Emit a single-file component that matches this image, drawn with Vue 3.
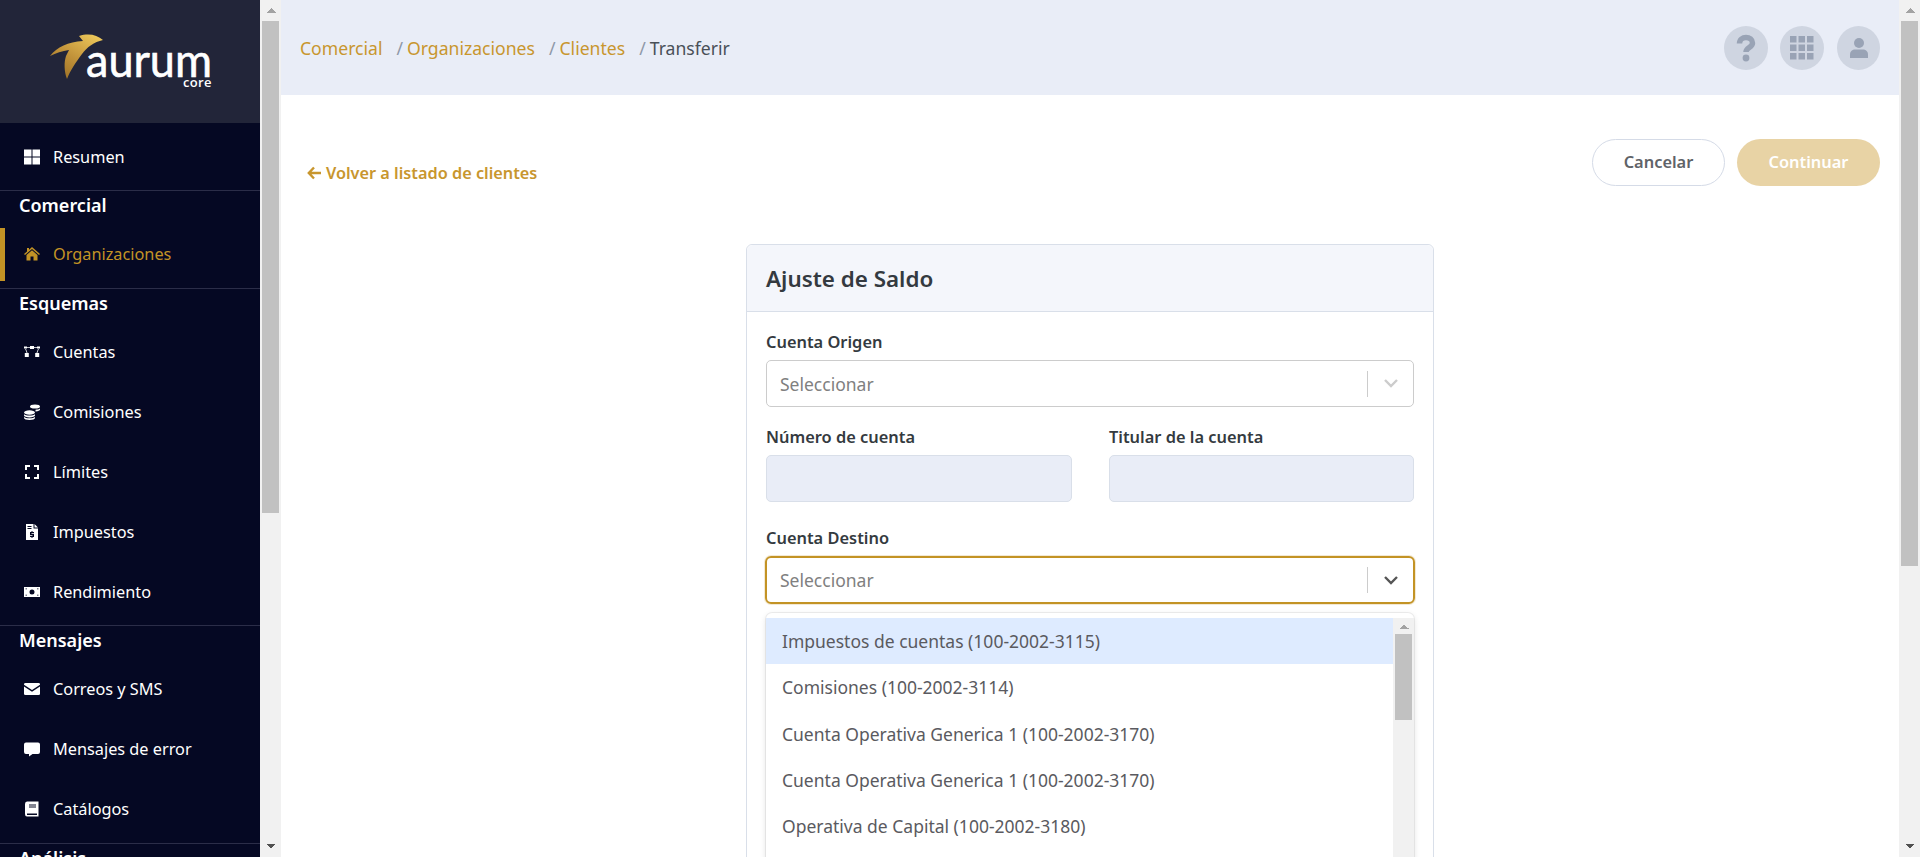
<template>
  <div class="layout">

    <!-- sidebar -->
    <aside class="sidebar">
      <div class="logo">
        <svg width="180" height="70" viewBox="0 0 180 70">
          <defs>
            <linearGradient id="gold" x1="0.9" y1="0" x2="0.2" y2="1">
              <stop offset="0" stop-color="#efca5c" />
              <stop offset="0.55" stop-color="#c2933a" />
              <stop offset="1" stop-color="#9c7026" />
            </linearGradient>
          </defs>
          <path fill="url(#gold)" d="M10 31C17 22 28 17 43 16L39 11C49 8 57 10 63 15C54 17 47 22 42 29C36 37 30 46 27 54C24 46 24 37 26 31C27 29 28 27 29 25C22 26 16 28 10 31Z" />
          <text class="logo-name" x="46" y="52" textLength="126" lengthAdjust="spacingAndGlyphs">aurum</text>
          <text class="logo-sub" x="172" y="62" text-anchor="end">core</text>
        </svg>
      </div>

      <nav>
        <div v-for="(group, i) in menu" :key="i" class="group">
          <div v-if="group.title" class="group-title">{{ group.title }}</div>
          <a v-for="item in group.items" :key="item.label" class="item" :class="{ active: item.active }">
            <svg class="item-icon" width="16" height="16" viewBox="0 0 16 16">
              <path fill="currentColor" fill-rule="evenodd" :d="icons[item.icon]" />
            </svg>
            <span>{{ item.label }}</span>
          </a>
        </div>
      </nav>
    </aside>
    <div class="scrollbar">
      <div class="sb-btn up"></div>
      <div class="sb-track"><div class="sb-thumb side-thumb"></div></div>
      <div class="sb-btn down"></div>
    </div>

    <!-- main content -->
    <main class="main">
      <header class="topbar">
        <div class="crumbs">
          <a>Comercial</a>
          <span class="sep">/</span><a>Organizaciones</a>
          <span class="sep">/</span><a>Clientes</a>
          <span class="sep">/</span><span class="current">Transferir</span>
        </div>
        <div class="top-actions">
          <button class="round">
            <svg width="24" height="28" viewBox="0 0 24 28">
              <path d="M5.500 9.500C5.500 5.500 8.500 3.500 12 3.500S18.500 5.500 18.500 9C18.500 13.500 12 13.500 12 18" fill="none" stroke="#99a3b5" stroke-width="5.500" />
              <circle cx="12" cy="24" r="3.400" fill="#99a3b5" />
            </svg>
          </button>
          <button class="round">
            <svg width="24" height="24" viewBox="0 0 24 24" fill="#99a3b5">
              <template v-for="r in 3" :key="r">
                <rect v-for="c in 3" :key="c" :x="(c - 1) * 8.500" :y="(r - 1) * 8.500" width="6.500" height="6.500" />
              </template>
            </svg>
          </button>
          <button class="round">
            <svg width="20" height="22" viewBox="0 0 20 22" fill="#99a3b5">
              <circle cx="10" cy="6" r="5" />
              <path d="M1 21V17.500C1 14 3.500 12.500 6 12.500H14C16.500 12.500 19 14 19 17.500V21Z" />
            </svg>
          </button>
        </div>
      </header>

      <div class="toolbar">
        <a class="back">
          <svg width="15" height="14" viewBox="0 0 15 14">
            <path d="M14 7H2M7 1.500L1.800 7L7 12.500" fill="none" stroke="currentColor" stroke-width="2.400" />
          </svg>
          Volver a listado de clientes
        </a>
        <div class="toolbar-btns">
          <button class="btn btn-cancel">Cancelar</button>
          <button class="btn btn-go">Continuar</button>
        </div>
      </div>

      <section class="card">
        <div class="card-head">Ajuste de Saldo</div>
        <div class="card-body">
          <label>Cuenta Origen</label>
          <div class="select">
            <span>Seleccionar</span>
            <div class="select-arrow">
              <svg width="14" height="9" viewBox="0 0 14 9"><path d="M1 1L7 7L13 1" fill="none" stroke="#cccccc" stroke-width="2.400" /></svg>
            </div>
          </div>

          <div class="two-cols">
            <div>
              <label>Número de cuenta</label>
              <div class="readonly"></div>
            </div>
            <div>
              <label>Titular de la cuenta</label>
              <div class="readonly"></div>
            </div>
          </div>

          <label>Cuenta Destino</label>
          <div class="select-wrap">
            <div class="select focused">
              <span>Seleccionar</span>
              <div class="select-arrow">
                <svg width="14" height="9" viewBox="0 0 14 9"><path d="M1 1L7 7L13 1" fill="none" stroke="#555555" stroke-width="2.400" /></svg>
              </div>
            </div>
            <div class="dropdown">
              <div class="options">
                <div v-for="(o, i) in accounts" :key="i" class="option" :class="{ hover: i === 0 }">{{ o }}</div>
              </div>
              <div class="scrollbar list-bar">
                <div class="sb-btn up"></div>
                <div class="sb-track"><div class="sb-thumb list-thumb"></div></div>
                <div class="sb-btn down"></div>
              </div>
            </div>
          </div>
        </div>
      </section>
    </main>
    <div class="scrollbar">
      <div class="sb-btn up"></div>
      <div class="sb-track"><div class="sb-thumb main-thumb"></div></div>
      <div class="sb-btn down"></div>
    </div>
  </div>
</template>

<script setup>
const icons = {
  grid: 'M0 0.500h7.500v7H0zM8.500 0.500H16v7H8.500zM0 8.500h7.500v7H0zM8.500 8.500H16v7H8.500z',
  home: 'M8 1L16 8L15 9L8 3L1 9L0 8L3 5.400V2h2v1.700zM8 4.300L13.500 9v5.500h-4v-4h-3v4h-4V9z',
  diagram: 'M6 2h4v3H6zM0 2.500h3v2H0zM13 2.500h3v2h-3zM0.800 9h4v4h-4zM11.200 9h4v4h-4zM3 3h3v0.700H3zM10 3h3v0.700h-3zM2 5l1.500 4h-0.800L1.200 5zM14 5l-1.500 4h0.800L14.800 5z',
  coins: 'M6 2.500a5 2 0 1 0 10 0a5 2 0 1 0-10 0zM11.500 5.700c2 0 3.500-0.400 4.500-1.200v1.300c0 0.800-1.800 1.500-4.500 1.600zM0 8.500a5.500 2.200 0 1 0 11 0a5.500 2.200 0 1 0-11 0zM0 10.200c1 0.900 3 1.400 5.500 1.400s4.500-0.500 5.500-1.400v1.300c0 1-2.500 1.900-5.500 1.900S0 12.500 0 11.500zM0 13c1 0.900 3 1.300 5.500 1.300s4.500-0.400 5.500-1.300v1c0 1-2.500 2-5.500 2S0 15 0 14z',
  limits: 'M1 1h5v2H3v3H1zM10 1h5v5h-2V3h-3zM1 10h2v3h3v2H1zM13 10h2v5h-5v-2h3z',
  invoice: 'M2 0h7.500v4.500H14V16H2zM10.500 0L14 3.500h-3.500zM3.500 2h4v1h-4zM3.500 4h4v1h-4zM7.500 7h1v1h1.500v1.200H7.500v0.800h2.500v3H8.500v1h-1v-1H6v-1.200h2.500v-0.800H6V8h1.500z',
  money: 'M0 3h16v10H0zM5.500 8a2.500 2.500 0 1 0 5 0a2.500 2.500 0 1 0-5 0zM1.500 4.500h1.500v0.800H1.500zM13 4.500h1.500v0.800H13zM1.500 10.700h1.500v0.800H1.500zM13 10.700h1.500v0.800H13z',
  mail: 'M0 3.200Q0 2 1.500 2h13Q16 2 16 3.200v0.600L8 9L0 3.800zM0 5.500L8 10.700L16 5.500V13q0 1-1.500 1h-13Q0 14 0 13z',
  comment: 'M2 1.500h12q2 0 2 2v7.500q0 2-2 2H8.500l-3.500 2.500v-2.500H2q-2 0-2-2V3.500q0-2 2-2z',
  book: 'M3 0.500h11.500v15H3Q1 15.500 1 13V3Q1 0.500 3 0.500zM5 3.500h7v1H5zM5 5.500h7v1H5zM3 12.500h10v1.500H3z'
};

const menu = [
  { items: [{ label: 'Resumen', icon: 'grid' }] },
  { title: 'Comercial', items: [{ label: 'Organizaciones', icon: 'home', active: true }] },
  {
    title: 'Esquemas',
    items: [
      { label: 'Cuentas', icon: 'diagram' },
      { label: 'Comisiones', icon: 'coins' },
      { label: 'Límites', icon: 'limits' },
      { label: 'Impuestos', icon: 'invoice' },
      { label: 'Rendimiento', icon: 'money' }
    ]
  },
  {
    title: 'Mensajes',
    items: [
      { label: 'Correos y SMS', icon: 'mail' },
      { label: 'Mensajes de error', icon: 'comment' },
      { label: 'Catálogos', icon: 'book' }
    ]
  },
  { title: 'Análisis', items: [] }
];

const accounts = [
  'Impuestos de cuentas (100-2002-3115)',
  'Comisiones (100-2002-3114)',
  'Cuenta Operativa Generica 1 (100-2002-3170)',
  'Cuenta Operativa Generica 1 (100-2002-3170)',
  'Operativa de Capital (100-2002-3180)'
];
</script>

<style>
html, body { margin: 0; height: 100%; overflow: hidden; }
</style>

<style scoped>
.layout {
  display: flex;
  height: 857px;
  overflow: hidden;
  font-family: "Noto Sans", sans-serif;
  color: #343a40;
  background: #fff;
}

/* drawn scrollbars */
.scrollbar {
  display: flex;
  flex-direction: column;
  flex: none;
  width: 21px;
  background: #f1f1f1;
}
.sb-btn {
  flex: none;
  height: 21px;
  background-repeat: no-repeat;
  background-position: center;
  background-size: 10px 5px;
}
.sb-btn.up { background-image: conic-gradient(from 135deg at 50% 0, #a3a3a3 90deg, transparent 0); }
.sb-btn.down { background-image: conic-gradient(from -45deg at 50% 100%, #505050 90deg, transparent 0); }
.sb-track { flex: 1; padding: 0 2px; }
.sb-thumb { background: #c1c1c1; }
.side-thumb { height: 492px; }
.main-thumb { height: 545px; }
.list-thumb { height: 86px; }
.list-bar .sb-btn { height: 16px; }

/* sidebar */
.sidebar {
  width: 260px;
  flex: none;
  overflow: hidden;
  background: #050823;
}
.logo {
  height: 123px;
  background: #222539;
  padding: 25px 0 0 40px;
  box-sizing: border-box;
}
.logo svg { display: block; }
.logo-name { font-family: "Lato", sans-serif; font-size: 47px; fill: #fff; stroke: #fff; stroke-width: 0.6px; }
.logo-sub { font-family: "Open Sans", sans-serif; font-size: 13px; font-weight: 600; letter-spacing: 0.4px; fill: #fff; }

nav { padding-top: 7px; }
.group + .group { border-top: 1px solid #2b2d48; }
.group-title {
  height: 36.500px;
  line-height: 29px;
  padding-left: 19px;
  font-size: 18px;
  font-weight: 600;
  color: #fff;
}
.item {
  display: flex;
  align-items: center;
  height: 53px;
  margin-bottom: 7px;
  padding-left: 24px;
  color: #fff;
  font-size: 16.300px;
}
.item-icon { flex: none; margin-right: 13px; }
.item.active {
  color: #c39325;
  border-left: 5px solid #c39325;
  padding-left: 19px;
}

/* main */
.main { flex: 1; min-width: 0; overflow: hidden; }

.topbar {
  display: flex;
  align-items: center;
  justify-content: space-between;
  height: 95px;
  padding: 0 19px;
  background: #e9edf7;
}
.crumbs { font-size: 17.600px; color: #c8962e; }
.sep { color: #8f98a8; margin: 0 4px 0 14px; }
.current { color: #495057; }
.top-actions { display: flex; gap: 12px; }
.round {
  display: flex;
  align-items: center;
  justify-content: center;
  width: 44px;
  height: 44px;
  padding: 0;
  border: none;
  border-radius: 50%;
  background: #cfd5e1;
}
.round:last-child { width: 43px; margin-left: 1px; }

.toolbar {
  display: flex;
  align-items: flex-end;
  justify-content: space-between;
  padding: 44px 19px 0 26px;
}
.back {
  display: flex;
  align-items: center;
  gap: 4px;
  line-height: 24px;
  margin-bottom: 1px;
  font-size: 16.300px;
  font-weight: 600;
  color: #c8962e;
}
.toolbar-btns { display: flex; gap: 12px; }
.btn {
  height: 47px;
  padding-bottom: 3px;
  border-radius: 24px;
  font-family: inherit;
  font-size: 16.400px;
  font-weight: 600;
}
.btn-cancel { width: 133px; background: #fff; border: 1px solid #d5dbe7; color: #5f6368; }
.btn-go { width: 143px; background: #e8d3a5; border: none; color: #fff; }

/* card */
.card {
  width: 688px;
  margin: 58px auto 0;
  border: 1px solid #d9dfe9;
  border-radius: 6px;
  box-sizing: border-box;
}
.card-head {
  height: 67px;
  line-height: 67px;
  padding-left: 19px;
  font-size: 22.400px;
  font-weight: 600;
  color: #343a40;
  background: #f4f6fb;
  border-bottom: 1px solid #d9dfe9;
  border-radius: 6px 6px 0 0;
  box-sizing: border-box;
}
.card-body { padding: 20px 19px 400px; }
label {
  display: block;
  height: 20px;
  line-height: 20px;
  margin-bottom: 8px;
  font-size: 16.400px;
  font-weight: 600;
  color: #343a40;
}
.select {
  display: flex;
  align-items: center;
  justify-content: space-between;
  height: 47px;
  padding-left: 13px;
  border: 1px solid #ccc;
  border-radius: 5px;
  box-sizing: border-box;
  font-size: 17.500px;
  color: #808080;
}
.select-arrow {
  display: flex;
  align-items: center;
  justify-content: center;
  width: 45px;
  height: 26px;
  border-left: 1px solid #ccc;
}
.select.focused {
  height: 48px;
  margin: 0 -1px;
  padding-left: 13px;
  border: 2px solid #c39325;
  border-radius: 6px;
  box-shadow: 0 0 0 1px rgba(195, 147, 37, 0.2);
}
.two-cols {
  display: grid;
  grid-template-columns: 306px 305px;
  justify-content: space-between;
  margin: 20px 0 26px;
}
.readonly {
  height: 47px;
  background: #e9edf7;
  border: 1px solid #d9dfe9;
  border-radius: 5px;
  box-sizing: border-box;
}
.select-wrap { position: relative; }
.dropdown {
  position: absolute;
  top: 57px;
  left: 0;
  right: 0;
  display: flex;
  padding: 5px 0;
  background: #fff;
  border-radius: 6px;
  box-shadow: 0 0 0 1px rgba(0, 0, 0, 0.06), 0 2px 6px rgba(0, 0, 0, 0.12);
  z-index: 5;
}
.options { flex: 1; height: 300px; overflow: hidden; }
.option {
  height: 46.250px;
  line-height: 47px;
  padding-left: 16px;
  font-size: 17.500px;
  color: #5a5a60;
  white-space: nowrap;
}
.option.hover { background: #deebff; }
</style>
